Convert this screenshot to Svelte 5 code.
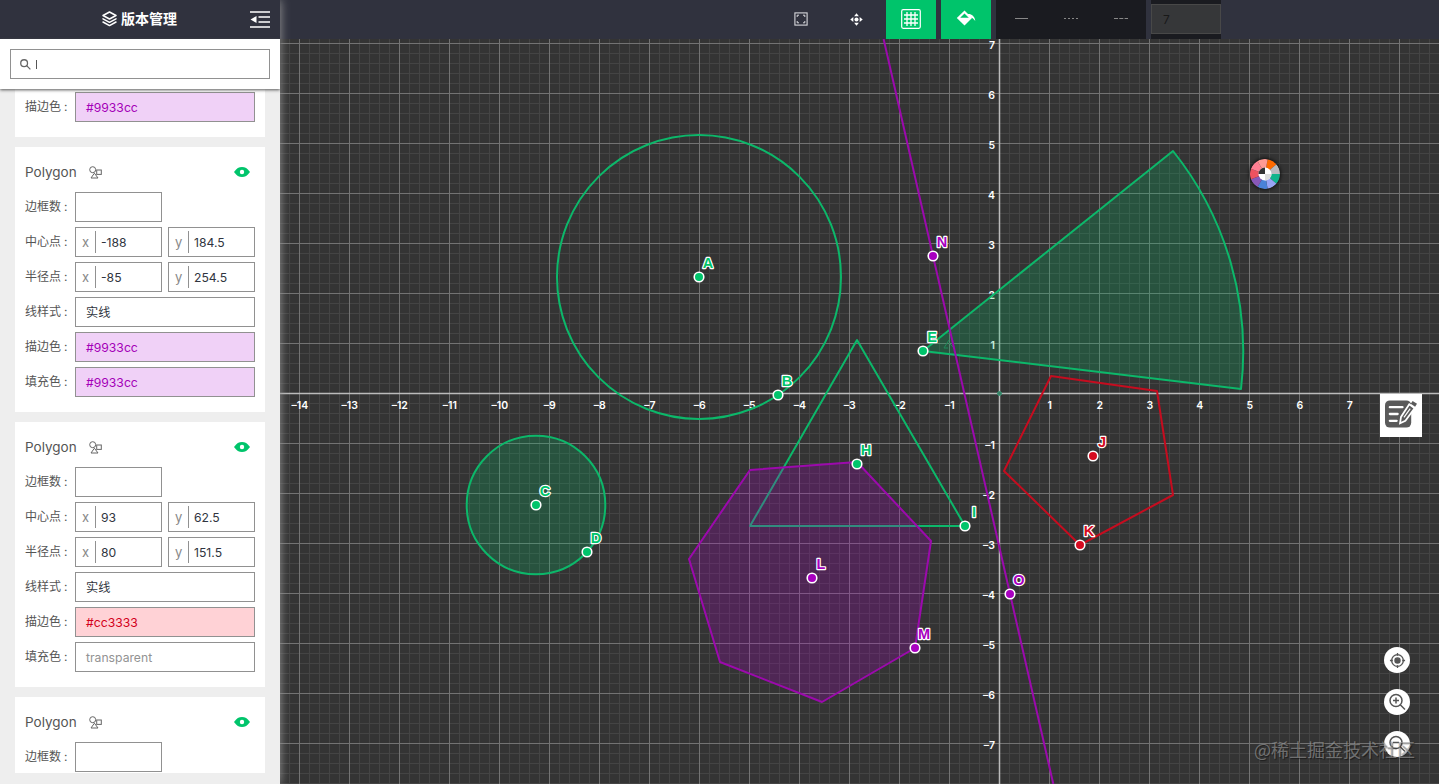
<script>
    const GREEN = "#00c46b"
    const PURPLE = "#a800c0"
    const RED = "#d60b20"

    // canvas is 1159 x 745, origin of the axes sits at 719.5, 354.5
    const ORIGIN = {x: 719.5, y: 354.5}
    const UNIT = 50

    let minorX = [], majorX = [], minorY = [], majorY = []
    for (let i = -72; i <= 44; i++) {
        (i % 5 ? minorX : majorX).push(ORIGIN.x + i * 10)
    }
    for (let i = -35; i <= 39; i++) {
        (i % 5 ? minorY : majorY).push(ORIGIN.y + i * 10)
    }

    let xLabels = []
    for (let n = -14; n <= 7; n++) if (n) xLabels.push(n)
    let yLabels = []
    for (let n = 7; n >= -7; n--) if (n) yLabels.push(n)

    const label = n => n < 0 ? `–${-n}` : `${n}`

    const points = [
        {name: "A", x: 419, y: 238, color: GREEN},
        {name: "B", x: 498, y: 356, color: GREEN},
        {name: "C", x: 256, y: 466, color: GREEN},
        {name: "D", x: 307, y: 513, color: GREEN},
        {name: "E", x: 643, y: 312, color: GREEN},
        {name: "H", x: 577, y: 425, color: GREEN},
        {name: "I", x: 685, y: 487, color: GREEN},
        {name: "J", x: 813, y: 417, color: RED},
        {name: "K", x: 800, y: 506, color: RED},
        {name: "L", x: 532, y: 539, color: PURPLE},
        {name: "M", x: 635, y: 609, color: PURPLE},
        {name: "N", x: 653, y: 217, color: PURPLE},
        {name: "O", x: 730, y: 555, color: PURPLE},
    ]

    const cards = [
        {center: ["-188", "184.5"], radius: ["-85", "254.5"], stroke: "#9933cc", fill: "#9933cc"},
        {center: ["93", "62.5"], radius: ["80", "151.5"], stroke: "#cc3333", fill: "transparent"},
    ]
    const tone = c => c === "#9933cc" ? "purple" : c === "#cc3333" ? "red" : "none"

    const wheel = ["#ff6a00", "#b9bac0", "#10b48c", "#98a4f5", "#4a82d8", "#8858b8", "#ee5260", "#ff7f92", "#ff9a94"]
    function slice(i) {
        const a = (i * 40 - 80) * Math.PI / 180
        const b = a + 40 * Math.PI / 180
        return `M15 15L${15 + 15 * Math.cos(a)} ${15 + 15 * Math.sin(a)}A15 15 0 0 1 ${15 + 15 * Math.cos(b)} ${15 + 15 * Math.sin(b)}Z`
    }
</script>

{#snippet rowName(name)}
    <span class="name">{name}<em>:</em></span>
{/snippet}

{#snippet colorRow(name, value)}
    <div class="row">{@render rowName(name)}<span class="field wide {tone(value)}">{value}</span></div>
{/snippet}

{#snippet pairRow(name, pair)}
    <div class="row">
        {@render rowName(name)}
        <span class="field half"><i>x</i><b>{pair[0]}</b></span>
        <span class="field half"><i>y</i><b>{pair[1]}</b></span>
    </div>
{/snippet}

{#snippet cardTop()}
    <div class="title">
        <span>Polygon</span>
        <svg width="13" height="13" viewBox="0 0 13 13" fill="none" stroke="#666"><circle cx="3.7" cy="3.7" r="3"/><rect x="7.7" y="4" width="4.6" height="4.4"/><path d="M5.4 7.2L9 12H2Z"/></svg>
        <svg class="eye" width="16" height="10" viewBox="0 0 16 10"><path d="M0 5C2.5 1.3 5 0 8 0S13.5 1.3 16 5C13.5 8.7 11 10 8 10S2.5 8.7 0 5Z" fill="#00c46b"/><circle cx="8" cy="5" r="2.2" fill="#fff"/></svg>
    </div>
    <div class="row">{@render rowName("边框数")}<span class="field half"></span></div>
{/snippet}

<main>
    <aside>
        <header>
            <svg class="layers" width="15" height="16" viewBox="0 0 15 16" fill="none" stroke="#fff" stroke-width="1.5" stroke-linejoin="round" stroke-linecap="round"><path d="M7.5 1L14 4.5L7.5 8L1 4.5ZM1 7.8L7.5 11.3L14 7.8M1 11L7.5 14.6L14 11"/></svg>
            <h1>版本管理</h1>
            <svg class="fold" width="20" height="17" viewBox="0 0 20 17"><path d="M0 1H20M8.5 6H20M8.5 11H20M0 16H20" stroke="#fff" stroke-width="1.7"/><path d="M6.5 5V12L.5 8.5Z" fill="#fff"/></svg>
        </header>
        <div class="search">
            <div class="box">
                <svg width="11" height="11" viewBox="0 0 12 12" fill="none" stroke="#666" stroke-width="1.4"><circle cx="4.5" cy="4.5" r="3.7"/><path d="M7 7L11.3 11.3"/></svg>
                <span class="caret"></span>
            </div>
        </div>
        <div class="list">
            <div class="card last-row">{@render colorRow("描边色", "#9933cc")}</div>
            {#each cards as card}
                <div class="card">
                    {@render cardTop()}
                    {@render pairRow("中心点", card.center)}
                    {@render pairRow("半径点", card.radius)}
                    <div class="row">{@render rowName("线样式")}<span class="field wide">实线</span></div>
                    {@render colorRow("描边色", card.stroke)}
                    {@render colorRow("填充色", card.fill)}
                </div>
            {/each}
            <div class="card first-row">{@render cardTop()}</div>
        </div>
    </aside>

    <section>
        <nav>
            <span class="tool"><svg width="14" height="14" viewBox="0 0 14 14" fill="none" stroke="#d8d8dc"><rect x=".9" y=".9" width="12.2" height="12.2" stroke-width="1.1"/><path d="M3.2 5V3.2H5M9 3.2H10.8V5M10.8 9V10.8H9M5 10.8H3.2V9"/></svg></span>
            <span class="tool"><svg width="13" height="13" viewBox="0 0 14 14" fill="#fff"><path d="M7 .3L9.6 3.6H4.400ZM7 13.7L4.4 10.4H9.6ZM.3 7L3.6 4.4V9.6ZM13.7 7L10.4 9.6V4.4Z"/><circle cx="7" cy="7" r="2.2"/></svg></span>
            <span class="tool on"><svg width="20" height="20" viewBox="0 0 20 20" fill="none" stroke="#fff"><rect x=".7" y=".7" width="18.6" height="18.6" rx="1.5" stroke-width="1.2"/><path d="M6 3V17M10 3V17M14 3V17M3 6H17M3 10H17M3 14H17" stroke-width="1.3"/></svg></span>
            <span class="tool on"><svg width="20" height="17" viewBox="0 0 20 17"><path d="M8.500 .5L16 8L8.5 15.500L.8 8Z" fill="#fff"/><path d="M8.5 3.500L12.800 7.800H4.200Z" fill="#00c46b"/><path d="M10.500 4.200C14.500 3.200 18.500 5 19.300 11C17.500 8.500 16 7.600 14 7.500Z" fill="#fff"/></svg></span>
            <div class="lines">
                <svg width="150" height="38" stroke="#888"><path d="M19 18.500H32"/><path d="M68 18.500H82" stroke-dasharray="2 2"/><path d="M118 18.500H132" stroke-dasharray="4 1.300"/></svg>
            </div>
            <div class="size"><span>7</span></div>
        </nav>

        <div class="board">
            <svg class="graph" width="1159" height="745">
                <g class="minor">
                    {#each minorX as x}<path d="M{x} 0V745"/>{/each}
                    {#each minorY as y}<path d="M0 {y}H1159"/>{/each}
                </g>
                <g class="major">
                    {#each majorX as x}<path d="M{x} 0V745"/>{/each}
                    {#each majorY as y}<path d="M0 {y}H1159"/>{/each}
                </g>
                <path class="axis" d="M{ORIGIN.x} 0V745M0 {ORIGIN.y}H1159"/>
                <g class="ticks" text-anchor="middle">
                    {#each xLabels as n}<text x={ORIGIN.x + n * UNIT + .3} y="370">{label(n)}</text>{/each}
                </g>
                <g class="ticks" text-anchor="end">
                    {#each yLabels as n}<text x="715" y={ORIGIN.y - n * UNIT + 5.5}>{label(n)}</text>{/each}
                </g>
                <circle cx={ORIGIN.x} cy={ORIGIN.y} r="2" fill="#397e65" stroke="#379574"/>
                <path class="angle" d="M664 309L669 301M664 309H668M669 304L673 308"/>

                <g stroke-width="2" stroke-linejoin="round">
                    <circle cx="419" cy="238" r="142" fill="none" stroke="#0cb86a"/>
                    <circle cx="256" cy="466" r="69.3" fill={GREEN} fill-opacity=".22" stroke="#0cb86a"/>
                    <path d="M643 312L893 112A321 321 0 0 1 961 350Z" fill={GREEN} fill-opacity=".22" stroke="#0cb86a"/>
                    <path d="M577 301L470 487L685 487Z" fill="none" stroke="#0cb86a"/>
                    <path d="M771 337L877 352L893 456L800 506L724 432Z" fill="none" stroke="#c60c1f"/>
                    <path d="M470 431L577 423L651 502L635 609L542 663L440 623L409 520Z" fill={PURPLE} fill-opacity=".24" stroke="#9c09ad"/>
                    <path d="M603.6 0L773.3 745" stroke="#9c09ad"/>
                </g>

                {#each points as p}
                    <circle cx={p.x} cy={p.y} r="4.8" fill={p.color} stroke="#fff" stroke-width="1.6"/>
                    <text class="point" x={p.x + 9} y={p.y - 9} text-anchor="middle" fill={p.color}>{p.name}</text>
                {/each}
            </svg>

            <svg class="wheel" width="30" height="30" viewBox="0 0 30 30">
                {#each wheel as color, i}<path d={slice(i)} fill={color}/>{/each}
                <circle cx="15" cy="15" r="6.5" fill="#fff"/>
                <path d="M15 15V8.5A6.5 6.5 0 0 0 8.5 15Z" fill="#333"/>
                <path d="M15 15V21.5A6.5 6.5 0 0 0 21.5 15Z" fill="#ddd"/>
            </svg>

            <div class="note">
                <svg width="33" height="30" viewBox="0 0 34 30"><rect x="0" y="1" width="27" height="28" rx="5" fill="#5a5a5a"/><path d="M5 8H18M5 15H13M5 22H12" stroke="#fff" stroke-width="2.4" stroke-linecap="round"/><path d="M25 5L30.500 9L21 22L15.500 24.500L16.500 18Z" fill="#5a5a5a" stroke="#fff" stroke-width="1.800"/><path d="M19.5 18.5L26 9.5" stroke="#fff" stroke-width="1.2"/><path d="M27.500 3L32 6" stroke="#5a5a5a" stroke-width="3.5"/></svg>
            </div>

            <div class="zoom">
                <span><svg width="17" height="17" viewBox="0 0 18 18" fill="none" stroke="#555" stroke-width="1.4"><circle cx="9" cy="9" r="6.2"/><circle cx="9" cy="9" r="2.7" fill="#555"/><path d="M9 1V4M9 14V17M1 9H4M14 9H17"/></svg></span>
                <span><svg width="18" height="18" viewBox="0 0 18 18" fill="none" stroke="#555" stroke-width="1.5"><circle cx="8" cy="7.5" r="6"/><path d="M12 11.5L17 16.5M5 7.5H11M8 4.5V10.5"/></svg></span>
                <span><svg width="18" height="18" viewBox="0 0 18 18" fill="none" stroke="#555" stroke-width="1.5"><circle cx="8" cy="7.5" r="6"/><path d="M12 11.5L17 16.5M5 7.5H11"/></svg></span>
            </div>
            <div class="watermark">@稀土掘金技术社区</div>
        </div>
    </section>
</main>

<style>
    main {
        display: flex;
        width: 1439px;
        height: 784px;
        overflow: hidden;
        background: #343434;
        font-family: Inter, "Noto Sans CJK SC", sans-serif;
        font-size: 13px;
    }

    aside {
        display: flex;
        flex-direction: column;
        flex: 0 0 280px;
        background: #eee;
        box-shadow: 0 0 10px #999;
        position: relative;
        z-index: 1;
    }

    header {
        display: flex;
        align-items: center;
        box-sizing: border-box;
        height: 39px;
        padding: 0 0 1px 102px;
        background: #30323e;
        color: #fff;
    }

    h1 {
        margin: 0 0 0 4px;
        font-size: 14px;
        line-height: 38px;
    }

    .fold {
        margin-left: 73px;
    }

    .search {
        height: 30px;
        padding: 10px;
        background: #fff;
        box-shadow: 0 1px 3px #555;
        position: relative;
        z-index: 1;
    }

    .box {
        display: flex;
        align-items: center;
        gap: 5px;
        box-sizing: border-box;
        height: 30px;
        padding-left: 9px;
        border: 1px solid #919191;
    }

    .caret {
        width: 1px;
        height: 9px;
        background: #555;
    }

    .list {
        padding: 0 15px;
    }

    .card {
        box-sizing: border-box;
        height: 265px;
        padding: 5px 10px;
        margin-bottom: 10px;
        background: #fff;
    }

    .last-row {
        height: 48px;
        padding-top: 3px;
    }

    .first-row {
        height: 76px;
    }

    .title {
        display: flex;
        align-items: center;
        height: 40px;
        color: #555;
        font-size: 13.5px;
    }

    .title span {
        line-height: 16px;
        margin-bottom: 1px;
    }

    .title svg {
        margin-left: 12px;
    }

    .title .eye {
        margin: 0 5px 0 auto;
    }

    .row {
        display: flex;
        gap: 6px;
        height: 30px;
        margin-bottom: 5px;
        line-height: 30px;
    }

    .name {
        width: 44px;
        color: #555;
        font-size: 12px;
        white-space: nowrap;
    }

    .name em {
        margin-left: 3px;
        font-style: normal;
    }

    .field {
        box-sizing: border-box;
        height: 30px;
        border: 1px solid #919191;
        color: #303540;
        font-size: 12.2px;
        line-height: 30px;
    }

    .wide {
        width: 180px;
        padding-left: 10px;
    }

    .half {
        display: flex;
        align-items: center;
        width: 87px;
    }

    .half i {
        width: 19px;
        border-right: 1px solid #919191;
        color: #888;
        font-style: normal;
        font-size: 13px;
        line-height: 22px;
        text-indent: 6px;
    }

    .half b {
        margin: 2px 0 0 5px;
        font-weight: 400;
    }

    .purple {
        background: #f0d1f7;
        color: #a400b8;
    }

    .red {
        background: #ffd2d6;
        color: #d3001b;
    }

    .none {
        color: #929292;
    }

    section {
        flex: 1;
    }

    nav {
        display: flex;
        gap: 5px;
        box-sizing: border-box;
        height: 39px;
        padding-left: 496px;
        background: #30323e;
    }

    .tool {
        display: flex;
        align-items: center;
        justify-content: center;
        width: 50px;
        height: 38px;
    }

    .on {
        height: 37px;
        padding-bottom: 2px;
        background: #00c46b;
    }

    .lines {
        width: 150px;
        background: #1a1b20;
    }

    .size {
        box-sizing: border-box;
        width: 70px;
        padding: 4px 0 5px;
        background: #1a1b20;
    }

    .size span {
        display: block;
        box-sizing: border-box;
        height: 30px;
        padding-left: 11px;
        border: 1px solid #484848;
        background: #363739;
        color: #191919;
        font-size: 12px;
        line-height: 29px;
    }

    .board {
        position: relative;
        height: 745px;
    }

    .graph {
        display: block;
    }

    .minor {
        stroke: #444;
    }

    .major {
        stroke: #737373;
    }

    .axis {
        stroke: #bbb;
        stroke-width: 1.5;
    }

    .ticks {
        fill: #fff;
        font: 600 10.5px Inter, "Liberation Sans", sans-serif;
    }

    .angle {
        fill: none;
        stroke: #287954;
    }

    .point {
        font: bold 14.5px "Liberation Sans", sans-serif;
        stroke: #fff;
        stroke-width: 2.4px;
        stroke-linejoin: round;
        paint-order: stroke;
    }

    .wheel {
        position: absolute;
        left: 970px;
        top: 120px;
        border-radius: 50%;
        box-shadow: 0 0 4px #000;
    }

    .note {
        position: absolute;
        left: 1100px;
        top: 355px;
        display: flex;
        align-items: center;
        justify-content: center;
        box-sizing: border-box;
        width: 42px;
        height: 43px;
        padding-bottom: 3px;
        background: #fff;
    }

    .zoom {
        position: absolute;
        right: 29px;
        top: 608px;
        display: grid;
        gap: 16px;
    }

    .zoom span {
        display: flex;
        align-items: center;
        justify-content: center;
        width: 26px;
        height: 26px;
        border-radius: 50%;
        background: #fff;
    }

    .watermark {
        position: absolute;
        right: 24px;
        top: 697px;
        color: rgba(160, 160, 160, .6);
        font: 18px/26px "Noto Sans CJK SC", sans-serif;
        text-shadow: 1px 1px 1px rgba(0, 0, 0, .45);
        white-space: nowrap;
    }
</style>
